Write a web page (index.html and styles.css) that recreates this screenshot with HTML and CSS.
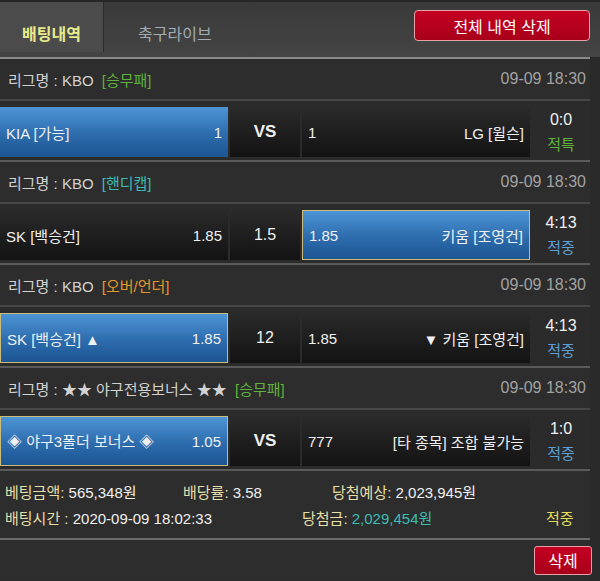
FILE: index.html
```html
<!DOCTYPE html>
<html lang="ko">
<head>
    <meta charset="UTF-8">
    <meta name="viewport" content="width=device-width, initial-scale=1.0">
    <title>배팅내역</title>
    <link rel="stylesheet" href="styles.css">
</head>
<body>
    <div class="page">
        <div class="topbar">
            <div class="tabs">
                <div class="tab active">배팅내역</div>
                <div class="tab">축구라이브</div>
            </div>
            <button class="btn-red btn-all">전체 내역 삭제</button>
        </div>

        <div class="content">
            <div class="game">
                <div class="game-head">
                    <span class="league">리그명 : KBO <span class="type green">[승무패]</span></span>
                    <span class="date">09-09 18:30</span>
                </div>
                <div class="game-row">
                    <div class="cell team pick"><span>KIA [가능]</span><span>1</span></div>
                    <div class="cell mid vs">VS</div>
                    <div class="cell team"><span>1</span><span>LG [윌슨]</span></div>
                    <div class="result"><div class="score">0:0</div><div class="green">적특</div></div>
                </div>
            </div>

            <div class="game">
                <div class="game-head">
                    <span class="league">리그명 : KBO <span class="type teal">[핸디캡]</span></span>
                    <span class="date">09-09 18:30</span>
                </div>
                <div class="game-row">
                    <div class="cell team"><span>SK [백승건]</span><span>1.85</span></div>
                    <div class="cell mid">1.5</div>
                    <div class="cell team pick selected"><span>1.85</span><span>키움 [조영건]</span></div>
                    <div class="result"><div class="score">4:13</div><div class="blue">적중</div></div>
                </div>
            </div>

            <div class="game">
                <div class="game-head">
                    <span class="league">리그명 : KBO <span class="type orange">[오버/언더]</span></span>
                    <span class="date">09-09 18:30</span>
                </div>
                <div class="game-row">
                    <div class="cell team pick selected"><span>SK [백승건] ▲</span><span>1.85</span></div>
                    <div class="cell mid">12</div>
                    <div class="cell team"><span>1.85</span><span>▼ 키움 [조영건]</span></div>
                    <div class="result"><div class="score">4:13</div><div class="blue">적중</div></div>
                </div>
            </div>

            <div class="game">
                <div class="game-head">
                    <span class="league">리그명 : ★★ 야구전용보너스 ★★ <span class="type green">[승무패]</span></span>
                    <span class="date">09-09 18:30</span>
                </div>
                <div class="game-row">
                    <div class="cell team pick selected"><span>◈ 야구3폴더 보너스 ◈</span><span>1.05</span></div>
                    <div class="cell mid vs">VS</div>
                    <div class="cell team"><span>777</span><span>[타 종목] 조합 불가능</span></div>
                    <div class="result"><div class="score">1:0</div><div class="blue">적중</div></div>
                </div>
            </div>

            <div class="summary">
                <div class="line line-1">
                    <span><em>베팅금액:</em> 565,348원</span>
                    <span><em>배당률:</em> 3.58</span>
                    <span><em>당첨예상:</em> 2,023,945원</span>
                </div>
                <div class="line line-2">
                    <span><em>배팅시간 :</em> 2020-09-09 18:02:33</span>
                    <span><em>당첨금:</em> <span class="teal">2,029,454원</span></span>
                    <span class="win">적중</span>
                </div>
            </div>

            <div class="footer">
                <button class="btn-red btn-del">삭제</button>
            </div>
        </div>
    </div>
</body>
</html>
```

FILE: styles.css
```css
body {
    margin: 0;
    background-color: #2a2a2a;
    font-family: "Liberation Sans", "Noto Sans CJK KR", sans-serif;
    color: #e6e6e6;
}

.page {
    width: 600px;
    height: 581px;
    overflow: hidden;
}

.topbar {
    height: 55px;
    border-top: 2px solid #262626;
    background: linear-gradient(#3a3a3a, #444);
    display: flex;
    justify-content: space-between;
    align-items: flex-start;
}

.tabs {
    display: flex;
}

.tab {
    height: 50px;
    box-sizing: border-box;
    padding: 0 24px 7px;
    display: flex;
    align-items: flex-end;
    white-space: nowrap;
    font-size: 16px;
    color: #a3abb3;
}

.tab.active {
    width: 104px;
    padding: 0 0 7px;
    justify-content: center;
    background-color: #4b4b4b;
    border-right: 1px solid #2c2c2c;
    color: #e8ea8c;
    font-weight: bold;
    margin-right: 10px;
}

.btn-red {
    background: linear-gradient(#c40022, #a8001a);
    border: 1px solid #e5a0a8;
    border-radius: 4px;
    color: #fff;
    font-family: inherit;
    font-size: 16px;
    cursor: pointer;
}

.btn-all {
    width: 176px;
    height: 31px;
    margin: 8px 10px 0 0;
}

.content {
    width: 590px;
    border-top: 2px solid #8a8a8a;
    background-color: #2d2d2d;
}

.game {
    border-bottom: 2px solid #5a5a5a;
}

.game-head {
    height: 40px;
    padding: 0 4px 0 8px;
    display: flex;
    justify-content: space-between;
    align-items: center;
    border-bottom: 2px solid #474747;
    font-size: 15px;
    color: #d2d2d2;
}

.type {
    margin-left: 4px;
}

.date {
    font-size: 16px;
    color: #a2a2a2;
}

.green {
    color: #5fb33a;
}

.teal {
    color: #3cbcb4;
}

.orange {
    color: #e3962c;
}

.blue {
    color: #5b9fd6;
}

.game-row {
    display: flex;
    gap: 2px;
    padding: 6px 0 3px;
    background-color: #2b2b2b;
}

.cell {
    height: 50px;
    box-sizing: border-box;
    padding: 0 6px;
    display: flex;
    justify-content: space-between;
    align-items: center;
    background: linear-gradient(#2a2a2a, #131313);
    font-size: 15px;
    color: #f0f0f0;
}

.team {
    width: 228px;
}

.mid {
    width: 70px;
    justify-content: center;
    font-size: 16px;
}

.vs {
    font-weight: bold;
    font-size: 17px;
}

.pick {
    background: linear-gradient(#4d95d6, #2d6cad 55%, #1c5592);
}

.selected {
    border: 1px solid #cbbd78;
}

.result {
    width: 58px;
    display: flex;
    flex-direction: column;
    justify-content: center;
    align-items: center;
    gap: 4px;
    font-size: 15px;
}

.score {
    font-size: 16px;
    color: #f0f0f0;
}

.summary {
    height: 67px;
    padding: 0 0 0 5px;
    display: flex;
    flex-direction: column;
    justify-content: center;
    gap: 5px;
    border-bottom: 2px solid #6a6a6a;
    font-size: 15px;
    color: #f0f0f0;
}

.line {
    display: grid;
}

.line-1 {
    grid-template-columns: 178px 149px auto;
}

.line-2 {
    grid-template-columns: 297px 244px auto;
}

.summary em {
    font-style: normal;
    color: #e6dfa8;
}

.win {
    color: #e3df5a;
}

.footer {
    height: 40px;
    display: flex;
    justify-content: flex-end;
    align-items: center;
}

.btn-del {
    width: 58px;
    height: 29px;
    margin-right: -2px;
    border-radius: 3px;
}
```
